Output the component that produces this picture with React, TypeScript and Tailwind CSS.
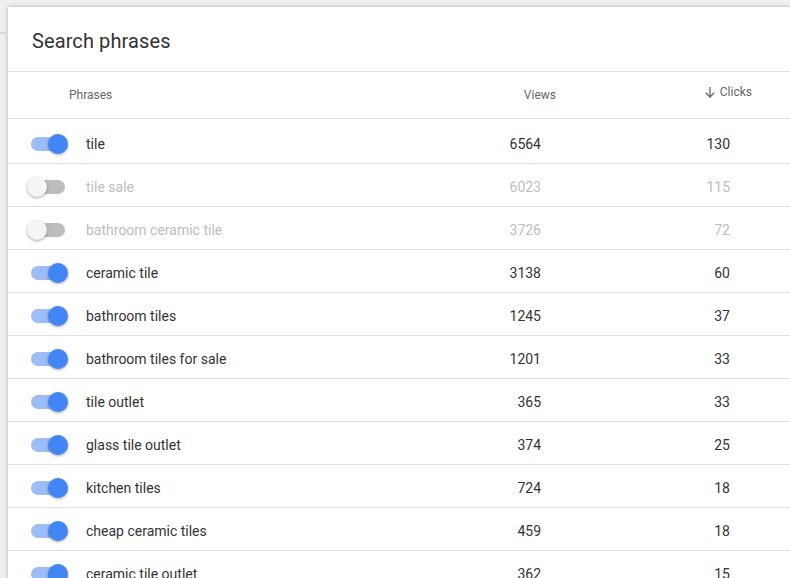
import React from 'react';

type Row = { phrase: string; views: number; clicks: number; on: boolean };

const rows: Row[] = [
  { phrase: 'tile', views: 6564, clicks: 130, on: true },
  { phrase: 'tile sale', views: 6023, clicks: 115, on: false },
  { phrase: 'bathroom ceramic tile', views: 3726, clicks: 72, on: false },
  { phrase: 'ceramic tile', views: 3138, clicks: 60, on: true },
  { phrase: 'bathroom tiles', views: 1245, clicks: 37, on: true },
  { phrase: 'bathroom tiles for sale', views: 1201, clicks: 33, on: true },
  { phrase: 'tile outlet', views: 365, clicks: 33, on: true },
  { phrase: 'glass tile outlet', views: 374, clicks: 25, on: true },
  { phrase: 'kitchen tiles', views: 724, clicks: 18, on: true },
  { phrase: 'cheap ceramic tiles', views: 459, clicks: 18, on: true },
  { phrase: 'ceramic tile outlet', views: 362, clicks: 15, on: true },
];

function Toggle({ on }: { on: boolean }) {
  return (
    <div className="relative w-[42px] h-[20px] flex items-center">
      <div
        className={`ml-[4px] w-[34px] h-[14px] rounded-full ${on ? 'bg-[#9dbdf7]' : 'bg-[#bdbdbd]'}`}
      />
      <div
        className={`absolute top-0 w-[20px] h-[20px] rounded-full shadow-[0_1px_3px_rgba(0,0,0,0.35)] ${
          on ? 'left-[21px] bg-[#4285f4]' : 'left-0 bg-[#f5f5f5]'
        }`}
      />
    </div>
  );
}

export default function App() {
  return (
    <div
      className="w-[790px] h-[578px] overflow-hidden bg-[#efefef] relative"
      style={{ fontFamily: 'Roboto, "Liberation Sans", Arial, sans-serif' }}
    >
      <div className="absolute left-0 top-[32px] w-[6px] h-[2px] bg-[#d8d8d8]" />
      <div className="ml-[8px] mt-[7px] w-[800px] h-[600px] bg-white shadow-[0_0_4px_rgba(0,0,0,0.25)]">
        <div className="h-[65px] border-b border-[#e0e0e0] flex items-center pl-[24px] pt-[3px]">
          <h1 className="text-[20px] text-[#333333] tracking-[0.1px]">Search phrases</h1>
        </div>
        <div className="h-[47px] border-b border-[#e0e0e0] flex items-center text-[12px] text-[#666666]">
          <div className="pl-[61px] w-[540px] -mt-[1px]">Phrases</div>
          <div className="w-[8px] text-right -mt-[1px] whitespace-nowrap flex justify-end">
            <span>Views</span>
          </div>
          <div className="w-[196px] flex justify-end -mt-[6px] items-center gap-[4px]">
            <svg width="12" height="12" viewBox="0 0 12 12" fill="none" stroke="#666" strokeWidth="1.3">
              <path d="M6 1v10M1.8 6.8 6 11l4.2-4.2" />
            </svg>
            <span>Clicks</span>
          </div>
        </div>
        {rows.map((r, i) => (
          <div
            key={r.phrase}
            className={`${i === 0 ? 'h-[45px]' : 'h-[43px]'} border-b border-[#e0e0e0] flex items-center text-[14px] ${
              r.on ? 'text-[#333333]' : 'text-[#bdbdbd]'
            }`}
          >
            <div className={`flex items-center w-[533px] ${i === 0 ? 'pt-[6px]' : 'pt-[4px]'}`}>
              <div className="ml-[19px]">
                <Toggle on={r.on} />
              </div>
              <span className="ml-[17px]">{r.phrase}</span>
            </div>
            <div className={`${i === 0 ? 'pt-[6px]' : 'pt-[4px]'} w-[0px] flex justify-end`}>
              <span>{r.views}</span>
            </div>
            <div className={`${i === 0 ? 'pt-[6px]' : 'pt-[4px]'} w-[189px] flex justify-end`}>
              <span>{r.clicks}</span>
            </div>
          </div>
        ))}
      </div>
    </div>
  );
}
